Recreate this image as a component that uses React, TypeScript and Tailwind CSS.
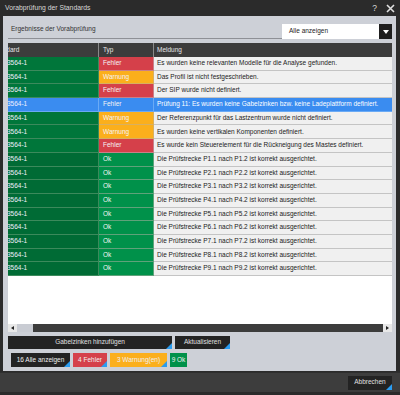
import * as React from "react";

type Row = { typ: "Fehler" | "Warnung" | "Ok"; msg: string; selected?: boolean };

const rows: Row[] = [
  { typ: "Fehler", msg: "Es wurden keine relevanten Modelle für die Analyse gefunden." },
  { typ: "Warnung", msg: "Das Profil ist nicht festgeschrieben." },
  { typ: "Fehler", msg: "Der SIP wurde nicht definiert." },
  { typ: "Fehler", msg: "Prüfung 11: Es wurden keine Gabelzinken bzw. keine Ladeplattform definiert.", selected: true },
  { typ: "Warnung", msg: "Der Referenzpunkt für das Lastzentrum wurde nicht definiert." },
  { typ: "Warnung", msg: "Es wurden keine vertikalen Komponenten definiert." },
  { typ: "Fehler", msg: "Es wurde kein Steuerelement für die Rückneigung des Mastes definiert." },
  ...[1, 2, 3, 4, 5, 6, 7, 8, 9].map((n) => ({
    typ: "Ok" as const,
    msg: `Die Prüfstrecke P${n}.1 nach P${n}.2 ist korrekt ausgerichtet.`,
  })),
];

function typClass(row: Row) {
  if (row.selected) return "bg-[#3a8cf0] border-[#6aaaf5]";
  if (row.typ === "Fehler") return "bg-[#d5404a] border-[#c98088]";
  if (row.typ === "Warnung") return "bg-[#fbaf1c] border-[#d8b060]";
  return "bg-[#00914a] border-[#5fa27a]";
}

function Corner() {
  return (
    <span className="absolute bottom-0 right-0 h-0 w-0 border-l-[3px] border-t-[3px] border-l-transparent border-t-transparent border-b-[3px] border-r-[3px] border-b-[#2a9cf0] border-r-[#2a9cf0]" />
  );
}

export default function App() {
  return (
    <div
      className="flex h-[395px] w-[400px] flex-col overflow-hidden bg-[#2b2b2b] text-[6.5px] leading-none"
      style={{ fontFamily: '"Liberation Sans", Arial, sans-serif' }}
    >
      {/* title bar */}
      <div className="flex h-[16px] shrink-0 items-center pl-[5px] pr-[4px] text-[#d8d8d8]">
        <span className="flex-1 text-[6.8px]">Vorabprüfung der Standards</span>
        <span className="mr-[9px] text-[8.5px]">?</span>
        <svg width="9" height="9" viewBox="0 0 9 9" className="mr-[1px]">
          <path d="M1 1L8 8M8 1L1 8" stroke="#e0e0e0" strokeWidth="1.6" />
        </svg>
      </div>

      {/* body */}
      <div className="ml-[3px] mr-[4px] flex h-[355px] shrink-0 flex-col bg-[#cdd0d7] pl-[5px] pr-[4px]">
        <div className="flex h-[23px] items-end">
          <div className="flex h-[19px] flex-1 items-center border-b border-[#8e9096] pl-[3px] text-[#333]">
            Ergebnisse der Vorabprüfung
          </div>
          <div className="flex h-[15px] w-[110px] items-stretch">
            <div className="flex flex-1 items-center bg-white pl-[7px] text-[#222]">Alle anzeigen</div>
            <div className="flex w-[13px] items-center justify-center bg-[#1e1e1e]">
              <svg width="6" height="4" viewBox="0 0 6 4">
                <path d="M0 0H6L3 4Z" fill="#fff" />
              </svg>
            </div>
          </div>
        </div>

        {/* table */}
        <div className="mt-[4px] flex h-[289px] flex-col bg-white">
          <div className="flex h-[14px] shrink-0 bg-[#3c3c3c] text-[#e6e6e6]">
            <div className="flex w-[91px] items-center overflow-hidden border-r border-[#8a8a8a]">
              <span className="ml-[-15px] whitespace-nowrap">Standard</span>
            </div>
            <div className="flex w-[55px] items-center border-r border-[#8a8a8a] pl-[4px]">Typ</div>
            <div className="flex flex-1 items-center pl-[3px]">Meldung</div>
          </div>
          <div className="flex flex-col">
            {rows.map((r, i) => (
              <div key={i} className="flex h-[13.69px] shrink-0">
                <div
                  className={
                    "flex w-[91px] items-center overflow-hidden border-b border-r text-[#eef] " +
                    (r.selected
                      ? "border-[#6aaaf5] bg-[#3a8cf0]"
                      : r.typ === "Ok"
                        ? "border-[#3c8a5c] bg-[#006b35]"
                        : "border-[#3c8a5c] bg-[#00763a]")
                  }
                >
                  <span className="ml-[-1px] whitespace-nowrap">3564-1</span>
                </div>
                <div
                  className={
                    "flex w-[55px] items-center border-b border-r pl-[4px] text-[#f4f4f4] " + typClass(r)
                  }
                >
                  {r.typ}
                </div>
                <div
                  className={
                    "flex flex-1 items-center overflow-hidden whitespace-nowrap border-b pl-[3px] " +
                    (r.selected ? "border-[#6aaaf5] bg-[#3a8cf0] text-white" : "border-[#c4c4c4] bg-[#f0f0f0] text-[#222]")
                  }
                >
                  {r.msg}
                </div>
              </div>
            ))}
          </div>
          <div className="flex-1" />
          {/* horizontal scrollbar */}
          <div className="flex h-[8px] shrink-0 bg-[#3c3c3c]">
            <div className="flex w-[9px] items-center justify-center bg-[#e8e8e8]">
              <svg width="3" height="4" viewBox="0 0 3 4">
                <path d="M3 0V4L0 2Z" fill="#222" />
              </svg>
            </div>
            <div className="w-[16px] bg-[#c9ccd3]" />
            <div className="flex-1" />
            <div className="flex w-[9px] items-center justify-center bg-[#e8e8e8]">
              <svg width="3" height="4" viewBox="0 0 3 4">
                <path d="M0 0V4L3 2Z" fill="#222" />
              </svg>
            </div>
          </div>
        </div>

        {/* action buttons */}
        <div className="mt-[4px] flex h-[13px] gap-[3px] text-[#e0e0e0]">
          <div className="relative flex w-[164px] items-center justify-center bg-[#232323]">
            Gabelzinken hinzufügen
            <Corner />
          </div>
          <div className="relative flex w-[55px] items-center justify-center bg-[#232323]">
            Aktualisieren
            <Corner />
          </div>
        </div>

        {/* filter buttons */}
        <div className="mt-[4px] flex h-[14px] gap-[3px] pl-[3px] text-[#f0f0f0]">
          <div className="relative flex w-[59px] items-center justify-center bg-[#232323]">
            16 Alle anzeigen
            <Corner />
          </div>
          <div className="relative flex w-[34px] items-center justify-center bg-[#d5404a]">
            4 Fehler
            <Corner />
          </div>
          <div className="relative flex w-[57px] items-center justify-center bg-[#fbaf1c]">
            3 Warnung(en)
            <Corner />
          </div>
          <div className="relative flex w-[17px] items-center justify-center whitespace-nowrap bg-[#00914a]">9 Ok</div>
        </div>
      </div>

      {/* footer */}
      <div className="mt-[1px] flex h-[20px] shrink-0 items-center justify-end border-t border-[#2f2f2f] bg-[#3d3d3d] pr-[8px]">
        <div className="relative flex h-[14px] w-[44px] items-center justify-center bg-[#232323] text-[#e0e0e0]">
          Abbrechen
          <Corner />
        </div>
      </div>
    </div>
  );
}
